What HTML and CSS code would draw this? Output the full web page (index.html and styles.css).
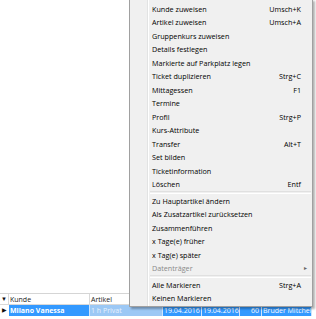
FILE: index.html
```html
<!DOCTYPE html>
<html lang="de">
<head>
  <meta charset="UTF-8" />
  <title>Kontextmenü</title>
  <link rel="stylesheet" href="styles.css">
</head>
<body>

<div class="screen">

  <!-- GRID -->
  <div class="grid">
    <div class="row head">
      <div class="cell ind">&#9660;</div>
      <div class="cell">Kunde</div>
      <div class="cell">Artikel</div>
      <div class="cell"></div>
      <div class="cell"></div>
      <div class="cell"></div>
      <div class="cell"></div>
    </div>
    <div class="row sel">
      <div class="cell ind">&#9654;</div>
      <div class="cell main">Milano Vanessa</div>
      <div class="cell soft">1 h Privat</div>
      <div class="cell">19.04.2016</div>
      <div class="cell">19.04.2016</div>
      <div class="cell num">60</div>
      <div class="cell">Bruder Mitchell</div>
    </div>
  </div>

  <!-- CONTEXT MENU -->
  <div class="menu">
    <div class="item"><span>Kunde zuweisen</span><span class="key">Umsch+K</span></div>
    <div class="item"><span>Artikel zuweisen</span><span class="key">Umsch+A</span></div>
    <div class="item"><span>Gruppenkurs zuweisen</span></div>
    <div class="item"><span>Details festlegen</span></div>
    <div class="item"><span>Markierte auf Parkplatz legen</span></div>
    <div class="item"><span>Ticket duplizieren</span><span class="key">Strg+C</span></div>
    <div class="item"><span>Mittagessen</span><span class="key">F1</span></div>
    <div class="item"><span>Termine</span></div>
    <div class="item"><span>Profil</span><span class="key">Strg+P</span></div>
    <div class="item"><span>Kurs-Attribute</span></div>
    <div class="item"><span>Transfer</span><span class="key">Alt+T</span></div>
    <div class="item"><span>Set bilden</span></div>
    <div class="item"><span>Ticketinformation</span></div>
    <div class="item"><span>Löschen</span><span class="key">Entf</span></div>
    <div class="sep"></div>
    <div class="item"><span>Zu Hauptartikel ändern</span></div>
    <div class="item"><span>Als Zusatzartikel zurücksetzen</span></div>
    <div class="item"><span>Zusammenführen</span></div>
    <div class="item"><span>x Tage(e) früher</span></div>
    <div class="item"><span>x Tag(e) später</span></div>
    <div class="item off"><span>Datenträger</span><span class="arrow">&#9656;</span></div>
    <div class="sep"></div>
    <div class="item"><span>Alle Markieren</span><span class="key">Strg+A</span></div>
    <div class="item"><span>Keinen Markieren</span></div>
  </div>

</div>

</body>
</html>
```

FILE: styles.css
```css
body {
  margin: 0;
  background: #fff;
  font-family: "Open Sans", "Noto Sans", sans-serif;
}
.screen {
  position: relative;
  width: 316px;
  height: 319px;
  overflow: hidden;
  display: flex;
  flex-direction: column;
  justify-content: flex-end;
  padding-bottom: 3px;
  box-sizing: border-box;
}

/* grid */
.grid {
  width: 312px;
  font-size: 7px;
}
.row {
  display: grid;
  grid-template-columns: 9px 81px 73px 39px 38px 22px 50px;
}
.cell {
  white-space: nowrap;
  overflow: hidden;
  padding-left: 1px;
}
.head {
  height: 12px;
  line-height: 11px;
  border-top: 1px solid #d5d5d5;
  box-sizing: border-box;
  color: #222;
}
.head .cell {
  border-right: 1px solid #d9d9d9;
  border-bottom: 1px solid #d9d9d9;
}
.ind {
  font-size: 6px;
  text-align: center;
  padding-left: 0;
  color: #111;
}
.sel {
  height: 11px;
  line-height: 11px;
}
.sel .cell {
  background: #3399ff;
  color: #fff;
  border-right: 1px solid #cfe4fb;
}
.sel .ind {
  background: #fff;
  color: #111;
  border-right: 0;
}
.sel .main {
  font-weight: bold;
}
.sel .soft {
  background: #9cc8f5;
  color: #e8f2fd;
}
.sel .num {
  text-align: right;
  padding-right: 2px;
}

/* menu */
.menu {
  position: absolute;
  left: 129px;
  top: -1px;
  width: 182px;
  padding: 2px 0 1px;
  border: 1px solid #a0a0a0;
  background: linear-gradient(to right, #f0f0f0 17px, #e2e3e3 17px, #e2e3e3 18px, #fff 18px, #fff 19px, #f0f0f0 19px);
  box-shadow: 2px 2px 2px rgba(0, 0, 0, 0.3);
  font-size: 7.2px;
  color: #000;
}
.item {
  display: flex;
  justify-content: space-between;
  align-items: center;
  height: 13.5px;
  padding: 0 11px 0 22px;
  white-space: nowrap;
}
.off {
  color: #8a8a8a;
}
.arrow {
  font-size: 6px;
  margin-right: -6px;
  color: #666;
}
.sep {
  height: 3px;
  margin: 0 1px 0 20px;
  box-sizing: border-box;
  border-top: 1px solid #e0e0e0;
  border-bottom: 1px solid #fff;
}
```
